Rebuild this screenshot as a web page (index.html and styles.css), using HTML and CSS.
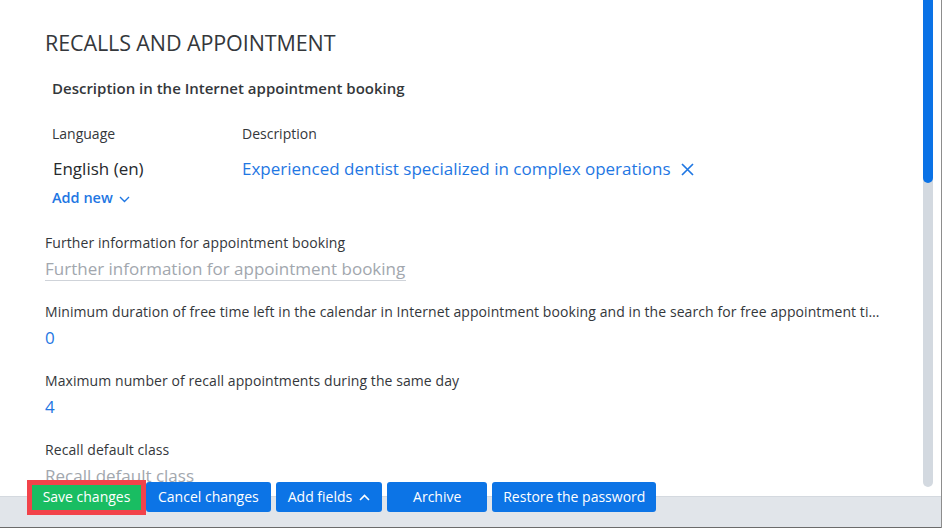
FILE: index.html
```html
<!DOCTYPE html>
<html lang="en">
<head>
<meta charset="utf-8">
<title>Recalls and appointment</title>
<link rel="stylesheet" href="styles.css">
</head>
<body>
<div class="window">
  <div class="body">
    <div class="content">
      <h1 class="title">RECALLS AND APPOINTMENT</h1>

      <section class="desc">
        <h2 class="desc-title">Description in the Internet appointment booking</h2>
        <div class="desc-grid">
          <div class="col-head">Language</div>
          <div class="col-head">Description</div>
          <div class="lang">English (en)</div>
          <div class="desc-value">
            <span>Experienced dentist specialized in complex operations</span>
            <svg class="remove" width="13" height="13" viewBox="0 0 13 13" aria-hidden="true">
              <path d="M1 1 L12 12 M12 1 L1 12" stroke="currentColor" stroke-width="1.7" fill="none"/>
            </svg>
          </div>
        </div>
        <a class="add-new" href="#">Add new
          <svg width="11" height="7" viewBox="0 0 11 7" aria-hidden="true">
            <path d="M1 1 L5.5 5.5 L10 1" stroke="currentColor" stroke-width="1.4" fill="none"/>
          </svg>
        </a>
      </section>

      <div class="field">
        <div class="label">Further information for appointment booking</div>
        <div class="value"><span class="placeholder">Further information for appointment booking</span></div>
      </div>

      <div class="field">
        <div class="label" title="Minimum duration of free time left in the calendar in Internet appointment booking and in the search for free appointment times">Minimum duration of free time left in the calendar in Internet appointment booking and in the search for free appointment times</div>
        <div class="value number">0</div>
      </div>

      <div class="field">
        <div class="label">Maximum number of recall appointments during the same day</div>
        <div class="value number">4</div>
      </div>

      <div class="field">
        <div class="label">Recall default class</div>
        <div class="value"><span class="placeholder">Recall default class</span></div>
      </div>
    </div>

    <div class="scrollbar"><div class="thumb"></div></div>
  </div>

  <footer class="footer">
    <div class="actions">
      <button class="btn btn-save">Save changes</button>
      <button class="btn">Cancel changes</button>
      <button class="btn btn-menu">Add fields
        <svg width="11" height="7" viewBox="0 0 11 7" aria-hidden="true">
          <path d="M1 6 L5.5 1.5 L10 6" stroke="currentColor" stroke-width="1.6" fill="none"/>
        </svg>
      </button>
      <button class="btn btn-wide">Archive</button>
      <button class="btn btn-restore">Restore the password</button>
    </div>
  </footer>
</div>
</body>
</html>
```

FILE: styles.css
```css
* {
  box-sizing: border-box;
}

html, body {
  margin: 0;
  padding: 0;
  background: #ffffff;
}

body {
  width: 944px;
  height: 528px;
  overflow: hidden;
  font-family: "Open Sans", "Noto Sans", sans-serif;
  color: #333539;
}

.window {
  width: 942px;
  height: 528px;
  display: flex;
  flex-direction: column;
  border-right: 1px solid #8d8d8d;
}

/* scrolling body: form on the left, scrollbar on the right */
.body {
  height: 496px;
  display: flex;
  overflow: hidden;
}

.content {
  width: 923px;
  padding: 28px 42px 0 45px;
  overflow: hidden;
}

.title {
  margin: 0;
  font-size: 21.5px;
  line-height: 30px;
  font-weight: 400;
  color: #34373b;
  letter-spacing: -0.1px;
}

.desc {
  padding-left: 7px;
  margin-top: 20px;
}

.desc-title {
  margin: 0;
  font-size: 15px;
  line-height: 20px;
  font-weight: 600;
  color: #34373b;
}

.desc-grid {
  display: grid;
  grid-template-columns: 190px 1fr;
  row-gap: 13px;
  margin-top: 26px;
}

.col-head {
  font-size: 14px;
  line-height: 20px;
  color: #34373b;
}

.lang {
  font-size: 17px;
  line-height: 24px;
  color: #26292d;
  padding-left: 1px;
}

.desc-value {
  display: flex;
  align-items: center;
  gap: 10px;
  font-size: 17px;
  line-height: 24px;
  color: #1f77e3;
}

.remove {
  display: block;
  margin-top: 1px;
}

.add-new {
  display: inline-flex;
  align-items: center;
  gap: 6px;
  margin-top: 7px;
  font-size: 14.5px;
  line-height: 20px;
  font-weight: 600;
  color: #1f77e3;
  text-decoration: none;
}

.add-new svg {
  margin-top: 2px;
}

.field {
  margin-top: 25px;
}

.field + .field {
  margin-top: 21px;
}

.label {
  font-size: 14px;
  line-height: 20px;
  letter-spacing: 0.08px;
  color: #34373b;
  white-space: nowrap;
  overflow: hidden;
  text-overflow: ellipsis;
}

.value {
  margin-top: 4px;
  height: 24px;
  font-size: 17px;
  line-height: 24px;
}

.number {
  color: #1f77e3;
}

.placeholder {
  display: inline-block;
  line-height: 22px;
  color: #a2a7ae;
  border-bottom: 1px solid #cfd3d9;
  padding-right: 1px;
}

/* custom scrollbar */
.scrollbar {
  width: 10px;
  height: 487px;
  margin-right: 8px;
  background: #d3d9e0;
  border-radius: 0 0 5px 5px;
}

.thumb {
  height: 183px;
  background: #0a72e6;
  border-radius: 0 0 5px 5px;
}

/* footer with action buttons floating over its top edge */
.footer {
  height: 32px;
  background: #e1e5ea;
  border-top: 1px solid #d4d9df;
  border-bottom: 1px solid #6b6b6b;
}

.actions {
  position: relative;
  display: flex;
  align-items: center;
  gap: 5px;
  height: 30px;
  margin-top: -15px;
  padding-left: 32px;
}

.btn {
  display: inline-flex;
  align-items: center;
  justify-content: center;
  gap: 9px;
  height: 30px;
  padding: 0 12px;
  border: none;
  border-radius: 3px;
  background: #0c74e6;
  color: #ffffff;
  font-family: "Open Sans", "Noto Sans", sans-serif;
  font-size: 14px;
  line-height: 20px;
  white-space: nowrap;
}

.btn svg {
  margin-top: 1px;
}

.btn-menu {
  gap: 7px;
}

.btn-wide {
  width: 100px;
}

.btn-restore {
  padding: 0 11px;
}

.btn-save {
  height: 25px;
  width: 109px;
  padding: 0;
  border-radius: 0;
  background: #19bd62;
  outline: 5px solid #f2434a;
}
```
